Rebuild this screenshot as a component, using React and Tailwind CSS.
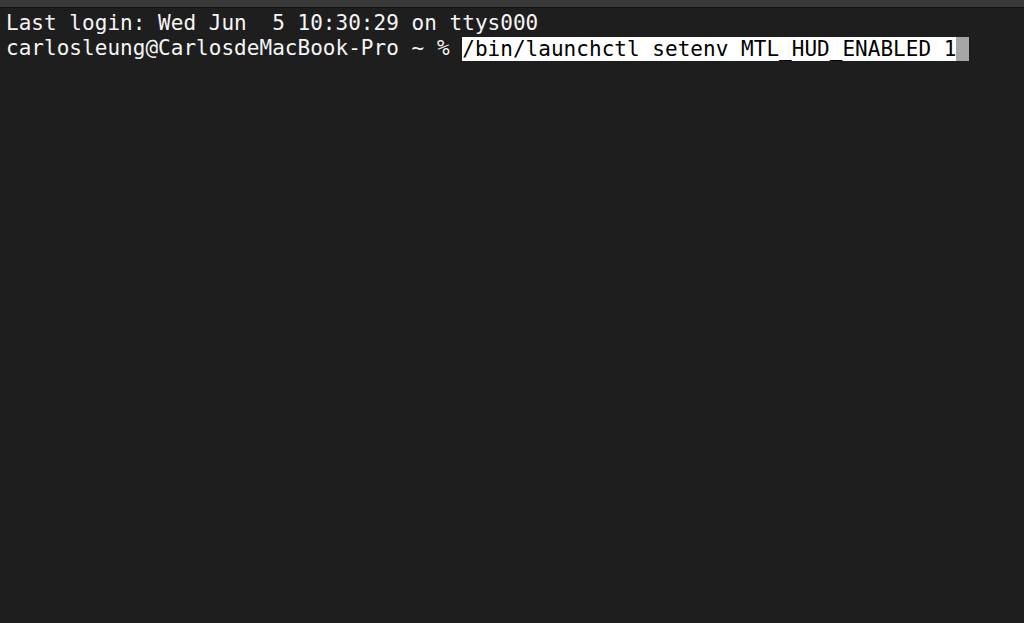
export default function App() {
  return (
    <div className="w-[1024px] h-[623px] bg-[#1e1e1e] flex flex-col overflow-hidden">
      <div className="h-[7px] bg-[#393939] shrink-0" />
      <div className="h-px bg-[#131313] shrink-0" />
      <div
        className="pl-[6px] pt-[3px] text-[21px] leading-[25px] tracking-[0.03px] text-[#f5f5f5] whitespace-pre"
        style={{ fontFamily: '"DejaVu Sans Mono", "Liberation Mono", monospace' }}
      >
        <div>Last login: Wed Jun  5 10:30:29 on ttys000</div>
        <div className="flex items-center">
          <span>carlosleung@CarlosdeMacBook-Pro ~ % </span>
          <span className="bg-white text-black h-[24px] leading-[24px]">/bin/launchctl setenv MTL_HUD_ENABLED 1</span>
          <span className="w-[13px] h-[24px] bg-[#a6a6a6]" />
        </div>
      </div>
    </div>
  );
}
